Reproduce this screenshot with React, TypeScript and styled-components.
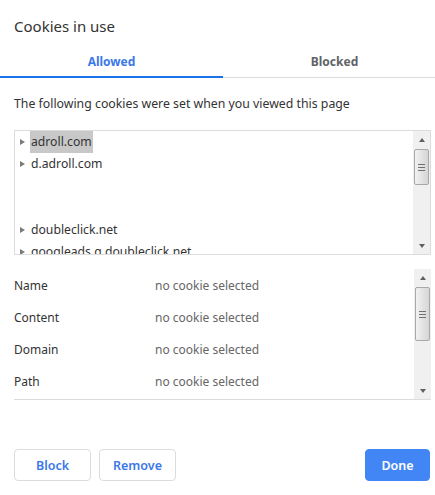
import React from "react";
import styled, { createGlobalStyle } from "styled-components";

const Global = createGlobalStyle`
  html, body { margin: 0; padding: 0; background: #fff; }
  body { font-family: "Noto Sans", "Open Sans", "Liberation Sans", sans-serif; }
`;

const Dialog = styled.div`
  width: 435px;
  height: 495px;
  background: #fff;
  display: flex;
  flex-direction: column;
  color: #333;
  overflow: hidden;
`;

const Title = styled.h1`
  margin: 0;
  padding: 16px 14px 0;
  height: 31px;
  font-size: 15px;
  font-weight: 400;
  line-height: 20px;
  color: #333;
`;

const TabBar = styled.div`
  display: flex;
  border-bottom: 1px solid #dadce0;
`;

const Tab = styled.div<{ $active?: boolean }>`
  width: 223px;
  flex-shrink: 0;
  height: 29px;
  margin-bottom: -1px;
  display: flex;
  align-items: center;
  justify-content: center;
  font-size: 12px;
  font-weight: 700;
  color: ${(p) => (p.$active ? "#3b78e7" : "#5f6368")};
  border-bottom: 2px solid ${(p) => (p.$active ? "#1a73e8" : "transparent")};
`;

const Description = styled.p`
  margin: 0;
  padding: 17px 14px 0;
  height: 35px;
  font-size: 12.3px;
  line-height: 18px;
  color: #333;
`;

const TreeBox = styled.div`
  margin: 0 4px 0 14px;
  height: 123px;
  border: 1px solid #dcdcdc;
  display: flex;
`;

const TreeList = styled.div`
  flex: 1;
  overflow: hidden;
`;

const TreeRow = styled.div`
  height: 22px;
  display: flex;
  align-items: center;
  padding-left: 5px;
  font-size: 12.2px;
  color: #333;
  white-space: nowrap;
`;

const Arrow = styled.span`
  width: 0;
  height: 0;
  border-top: 3.5px solid transparent;
  border-bottom: 3.5px solid transparent;
  border-left: 5px solid #7a7a7a;
  margin-right: 5px;
`;

const Label = styled.span<{ $selected?: boolean }>`
  padding: 0 1px;
  line-height: 22px;
  background: ${(p) => (p.$selected ? "#c8c8c8" : "transparent")};
`;

const Bar = styled.div`
  width: 17px;
  background: #f0f0f0;
  display: flex;
  flex-direction: column;
  flex-shrink: 0;
`;

const BarButton = styled.div`
  height: 17px;
  display: flex;
  align-items: center;
  justify-content: center;
`;

const Track = styled.div`
  flex: 1;
  display: flex;
  flex-direction: column;
`;

const Thumb = styled.div<{ $top: number; $height: number }>`
  margin: ${(p) => p.$top}px 1px 0;
  height: ${(p) => p.$height}px;
  border: 1px solid #a8a8a8;
  border-radius: 2px;
  background: linear-gradient(to right, #f2f2f2, #e0e0e0 60%, #d6d6d6);
  box-sizing: border-box;
  display: flex;
  flex-direction: column;
  align-items: center;
  justify-content: center;
  gap: 2px;
`;

const Grip = styled.span`
  width: 7px;
  height: 1px;
  background: #707070;
`;

const UpTri = styled.span`
  width: 0;
  height: 0;
  border-left: 3.5px solid transparent;
  border-right: 3.5px solid transparent;
  border-bottom: 4px solid #606060;
`;

const DownTri = styled.span`
  width: 0;
  height: 0;
  border-left: 3.5px solid transparent;
  border-right: 3.5px solid transparent;
  border-top: 4px solid #606060;
`;

const Scrollbar = ({ top, height }: { top: number; height: number }) => (
  <Bar>
    <BarButton>
      <UpTri />
    </BarButton>
    <Track>
      <Thumb $top={top} $height={height}>
        <Grip />
        <Grip />
        <Grip />
      </Thumb>
    </Track>
    <BarButton>
      <DownTri />
    </BarButton>
  </Bar>
);

const Details = styled.div`
  margin: 14px 4px 0 14px;
  height: 130px;
  border-bottom: 1px solid #dcdcdc;
  display: flex;
`;

const DetailList = styled.div`
  flex: 1;
`;

const DetailRow = styled.div`
  height: 32px;
  display: grid;
  grid-template-columns: 141px 1fr;
  align-items: center;
  font-size: 12px;
`;

const Key = styled.span`
  color: #333;
`;

const Value = styled.span`
  color: #666;
`;

const Footer = styled.div`
  margin-top: 49px;
  padding: 0 5px 0 14px;
  display: flex;
  gap: 8px;
`;

const Button = styled.button<{ $primary?: boolean }>`
  height: 32px;
  padding: 0;
  width: ${(p) => (p.$primary ? "65px" : "77px")};
  margin-left: ${(p) => (p.$primary ? "auto" : "0")};
  border-radius: 4px;
  border: 1px solid ${(p) => (p.$primary ? "#4285f4" : "#dadce0")};
  background: ${(p) => (p.$primary ? "#4285f4" : "#fff")};
  color: ${(p) => (p.$primary ? "#fff" : "#3b78e7")};
  font-family: inherit;
  font-size: 12.5px;
  font-weight: 600;
  box-sizing: border-box;
`;

const domains = ["adroll.com", "d.adroll.com", "", "", "doubleclick.net", "googleads.g.doubleclick.net"];
const fields = ["Name", "Content", "Domain", "Path"];

export default function App() {
  return (
    <Dialog>
      <Global />
      <Title>Cookies in use</Title>
      <TabBar>
        <Tab $active>Allowed</Tab>
        <Tab>Blocked</Tab>
      </TabBar>
      <Description>The following cookies were set when you viewed this page</Description>
      <TreeBox>
        <TreeList>
          {domains.map((d, i) => (
            <TreeRow key={i}>
              {d && (
                <>
                  <Arrow />
                  <Label $selected={i === 0}>{d}</Label>
                </>
              )}
            </TreeRow>
          ))}
        </TreeList>
        <Scrollbar top={1} height={36} />
      </TreeBox>
      <Details>
        <DetailList>
          {fields.map((f) => (
            <DetailRow key={f}>
              <Key>{f}</Key>
              <Value>no cookie selected</Value>
            </DetailRow>
          ))}
        </DetailList>
        <Scrollbar top={1} height={54} />
      </Details>
      <Footer>
        <Button>Block</Button>
        <Button>Remove</Button>
        <Button $primary>Done</Button>
      </Footer>
    </Dialog>
  );
}
